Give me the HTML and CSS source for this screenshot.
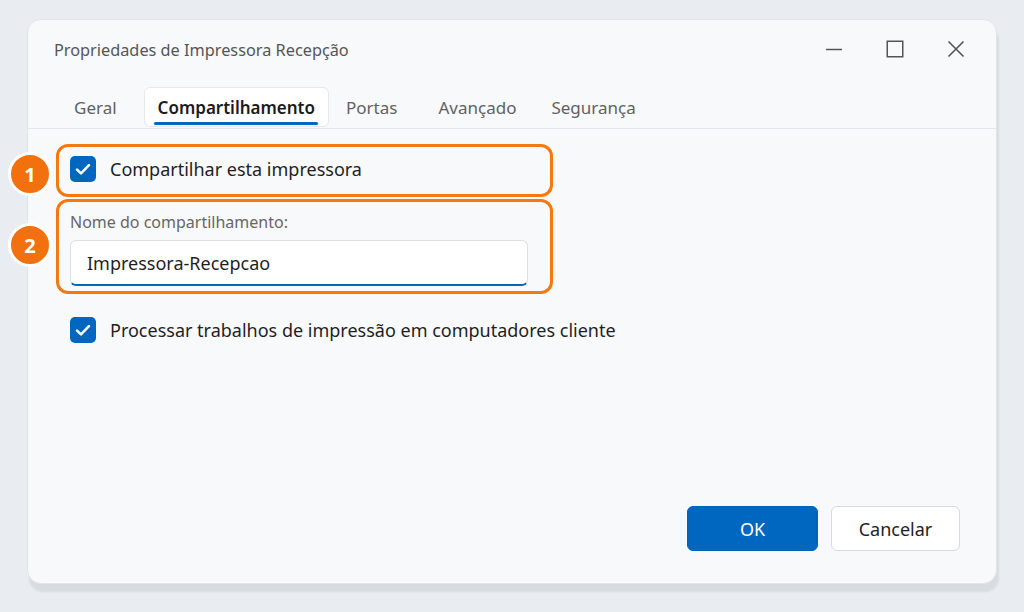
FILE: index.html
```html
<!DOCTYPE html>
<html lang="pt-BR">
<head>
<meta charset="utf-8">
<title>Propriedades de Impressora Recepção</title>
<link rel="stylesheet" href="styles.css">
</head>
<body>
<div class="window">
  <div class="titlebar">
    <span class="title">Propriedades de Impressora Recepção</span>
    <div class="controls">
      <svg class="ctl" width="18" height="18" viewBox="0 0 18 18"><path d="M1 9.5H17" stroke="#555" stroke-width="1.5" fill="none"/></svg>
      <svg class="ctl" width="18" height="18" viewBox="0 0 18 18"><rect x="1.25" y="1.25" width="15.5" height="15.5" stroke="#555" stroke-width="1.5" fill="none"/></svg>
      <svg class="ctl" width="18" height="18" viewBox="0 0 18 18"><path d="M1.5 1.5L16.5 16.5M16.5 1.5L1.5 16.5" stroke="#555" stroke-width="1.6" fill="none"/></svg>
    </div>
  </div>
  <div class="tabs">
    <span class="tab">Geral</span>
    <span class="tab active">Compartilhamento</span>
    <span class="tab">Portas</span>
    <span class="tab">Avançado</span>
    <span class="tab last">Segurança</span>
  </div>
  <div class="content">
    <div class="callout c1">
      <span class="badge b1">1</span>
      <div class="check-row">
        <span class="checkbox"><svg width="26" height="26" viewBox="0 0 26 26"><path d="M7 13.6L11 17.4L19 9.2" stroke="#fff" stroke-width="2.5" fill="none" stroke-linecap="round" stroke-linejoin="round"/></svg></span>
        <span class="check-label">Compartilhar esta impressora</span>
      </div>
    </div>
    <div class="callout c2">
      <span class="badge b2">2</span>
      <div class="field-label">Nome do compartilhamento:</div>
      <div class="input">Impressora-Recepcao</div>
    </div>
    <div class="check-row standalone">
      <span class="checkbox"><svg width="26" height="26" viewBox="0 0 26 26"><path d="M7 13.6L11 17.4L19 9.2" stroke="#fff" stroke-width="2.5" fill="none" stroke-linecap="round" stroke-linejoin="round"/></svg></span>
      <span class="check-label">Processar trabalhos de impressão em computadores cliente</span>
    </div>
  </div>
  <div class="footer">
    <button class="btn primary">OK</button>
    <button class="btn secondary">Cancelar</button>
  </div>
</div>
</body>
</html>
```
FILE: styles.css
```css
* { box-sizing: border-box; }
html, body { margin: 0; padding: 0; }
body {
  background: #e9ecf0;
  font-family: "Noto Sans", "Open Sans", sans-serif;
  width: 1024px;
  height: 612px;
  overflow: hidden;
}
.window {
  margin: 19px 0 0 27px;
  width: 970px;
  height: 565px;
  background: #f8f9fb;
  border: 1px solid #e1e4e8;
  border-radius: 14px;
  box-shadow: 2px 8px 2px rgba(0, 0, 0, 0.07);
  display: flex;
  flex-direction: column;
}
.titlebar {
  height: 67px;
  display: flex;
  align-items: center;
  justify-content: space-between;
  padding: 0 31px 8px 26px;
}
.title {
  font-size: 16.3px;
  color: #555;
}
.controls {
  display: flex;
  gap: 43px;
  align-items: center;
  margin-top: -2px;
}
.tabs {
  height: 42px;
  display: flex;
  align-items: flex-start;
  gap: 13px;
  padding-left: 32px;
  border-bottom: 1px solid #e3e5e8;
}
.tab {
  position: relative;
  height: 40px;
  padding: 0 14px;
  display: flex;
  align-items: center;
  font-size: 17px;
  color: #616161;
}
.tab.active + .tab { margin-left: -10px; }
.tab.last { margin-left: -6px; }
.tab.active {
  background: #ffffff;
  border: 1px solid #e6e8eb;
  border-radius: 6px;
  padding: 0 13px;
  color: #1b1b1b;
  font-weight: 600;
}
.tab.active::after {
  content: "";
  position: absolute;
  left: 9px;
  right: 10px;
  bottom: 1px;
  height: 3px;
  border-radius: 2px;
  background: #0067c0;
}
.content {
  padding: 15px 0 0 28px;
}
.callout {
  position: relative;
  width: 497px;
  border: 3px solid #f5790f;
  border-radius: 12px;
}
.c1 {
  height: 53px;
  padding-left: 11px;
  display: flex;
  align-items: center;
}
.c1 .check-row { margin-top: -4px; }
.c2 {
  margin-top: 2px;
  height: 95px;
  padding: 9px 0 0 11px;
}
.badge {
  position: absolute;
  left: -51px;
  width: 44px;
  height: 44px;
  border-radius: 50%;
  background: #f2700d;
  border: 3px solid #ffffff;
  color: #fff;
  font-weight: 700;
  font-size: 20px;
  display: flex;
  align-items: center;
  justify-content: center;
}
.b1 { top: 5px; }
.b2 { top: 21px; }
.check-row {
  display: flex;
  align-items: center;
  gap: 14px;
}
.checkbox {
  width: 26px;
  height: 26px;
  border-radius: 5px;
  background: #0067c0;
  display: flex;
}
.check-label {
  font-size: 18px;
  color: #1f1f1f;
}
.field-label {
  font-size: 16px;
  color: #666;
  line-height: 22px;
}
.input {
  margin-top: 7px;
  width: 458px;
  height: 46px;
  background: #fff;
  border: 1px solid #dcdfe3;
  border-bottom: 2px solid #0067c0;
  border-radius: 6px;
  padding-left: 16px;
  display: flex;
  align-items: center;
  font-size: 18px;
  color: #1f1f1f;
}
.standalone {
  margin: 23px 0 0 14px;
}
.footer {
  margin-top: auto;
  display: flex;
  justify-content: flex-end;
  gap: 13px;
  padding: 0 36px 32px 0;
}
.btn {
  height: 45px;
  border-radius: 6px;
  font-family: inherit;
  font-size: 18px;
  padding: 0;
}
.primary {
  width: 131px;
  background: #0067c0;
  border: 1px solid #0063b8;
  color: #fff;
}
.secondary {
  width: 129px;
  background: #fff;
  border: 1px solid #d6d9dd;
  color: #1f1f1f;
}
```
